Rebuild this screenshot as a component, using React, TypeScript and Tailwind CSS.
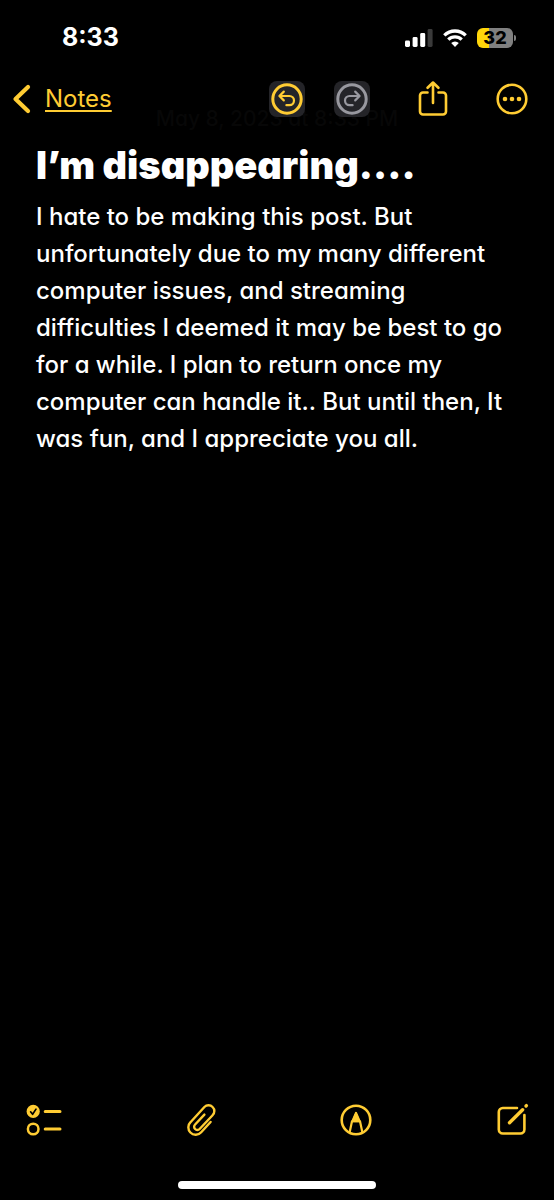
import type { ReactNode } from 'react';

const NOTE = {
  date: 'May 8, 2023 at 8:33 PM',
  title: 'I’m disappearing....',
  body: 'I hate to be making this post. But unfortunately due to my many different computer issues, and streaming difficulties I deemed it may be best to go for a while. I plan to return once my computer can handle it.. But until then, It was fun, and I appreciate you all.',
};

type IconButtonProps = {
  label: string;
  className?: string;
  disabled?: boolean;
  children: ReactNode;
};

function IconButton({ label, className = '', disabled, children }: IconButtonProps) {
  return (
    <button type="button" aria-label={label} disabled={disabled} className={`size-9 shrink-0 ${className}`}>
      <svg
        viewBox="0 0 36 36"
        className="size-9"
        fill="none"
        stroke="currentColor"
        strokeWidth="2.6"
        strokeLinecap="round"
        strokeLinejoin="round"
        aria-hidden="true"
      >
        {children}
      </svg>
    </button>
  );
}

function StatusBar() {
  return (
    <div className="flex h-[75px] items-center justify-between pl-[62px] pr-[38px]">
      <time className="text-[25px] font-bold">8:33</time>
      <div className="flex items-center gap-[10px]">
        <svg viewBox="0 0 28 18" className="h-[18px] w-7" fill="currentColor" aria-label="Signal">
          <rect x="0" y="11.5" width="5" height="6.5" rx="1.4" />
          <rect x="7.6" y="8" width="5" height="10" rx="1.4" />
          <rect x="15.2" y="4" width="5" height="14" rx="1.4" />
          <rect x="22.6" y="0" width="5" height="18" rx="1.4" fill="#3a3a3a" />
        </svg>
        <svg viewBox="0 0 24 18" className="h-[18px] w-6" fill="none" stroke="currentColor" strokeWidth="3.3" aria-label="Wi-Fi">
          <path d="M1.3 6.4a15.2 15.2 0 0 1 21.4 0" />
          <path d="M5.3 10.6a9.5 9.5 0 0 1 13.4 0" />
          <path d="M12 18 8.2 14.1a5.4 5.4 0 0 1 7.6 0z" fill="currentColor" stroke="none" />
        </svg>
        <div className="flex items-center gap-px">
          <span className="flex h-5 w-9 items-center justify-center rounded-md bg-linear-to-r from-[#ffd60a] from-33% to-[#808080] to-33% text-lg font-extrabold text-black">
            32
          </span>
          <span className="h-[6px] w-[2px] rounded-r-full bg-[#808080]" />
        </div>
      </div>
    </div>
  );
}

function NavBar() {
  return (
    <header className="relative flex h-12 items-center justify-between pl-3 pr-6 text-[#ffcc33]">
      <p className="absolute inset-x-0 top-7 text-center text-[21px] leading-8 font-medium text-[#070707] [font-feature-settings:'cv11']">
        {NOTE.date}
      </p>
      <a href="#notes" className="relative flex items-center gap-[14px] text-2xl">
        <svg viewBox="0 0 19 30" className="h-[30px] w-[19px]" fill="none" stroke="currentColor" strokeWidth="4.2" strokeLinecap="round" strokeLinejoin="round" aria-hidden="true">
          <path d="M16 3 3.5 15 16 27" />
        </svg>
        <span className="underline decoration-2 underline-offset-3">Notes</span>
      </a>
      <div className="relative flex items-center gap-11">
        <div className="flex gap-[29px]">
          <IconButton label="Undo" className="rounded-lg bg-[#242428]">
            <circle cx="18" cy="18" r="14.2" strokeWidth="3" />
            <path d="M14.8 10.6 10.4 15l4.4 4.4M10.8 15h9.6a4.6 4.6 0 0 1 0 9.2h-3" strokeWidth="2.2" />
          </IconButton>
          <IconButton label="Redo" disabled className="rounded-lg bg-[#242428] text-[#98989f]">
            <circle cx="18" cy="18" r="14.2" strokeWidth="3" />
            <path d="M21.2 10.6 25.6 15l-4.4 4.4M25.2 15h-9.6a4.6 4.6 0 0 0 0 9.2h3" strokeWidth="2.2" />
          </IconButton>
        </div>
        <IconButton label="Share">
          <path d="M13.500 11.500H9a3 3 0 0 0-3 3v16a3 3 0 0 0 3 3h20a3 3 0 0 0 3-3v-16a3 3 0 0 0-3-3h-4.500" />
          <path d="M19 22V1.8M13.600 6.8 19 1.5l5.400 5.3" />
        </IconButton>
        <IconButton label="More">
          <circle cx="18" cy="18" r="14.3" />
          <g fill="currentColor" stroke="none">
            <circle cx="11" cy="18" r="2.3" />
            <circle cx="18" cy="18" r="2.3" />
            <circle cx="25" cy="18" r="2.3" />
          </g>
        </IconButton>
      </div>
    </header>
  );
}

function Toolbar() {
  return (
    <nav className="flex items-center justify-between pl-[26px] pr-6 text-[#ffcc33]">
      <IconButton label="Checklist">
        <circle cx="7.2" cy="9.4" r="6.6" fill="currentColor" stroke="none" />
        <path d="m4.6 9.8 2 2.5 3.4-5.2" stroke="#000" strokeWidth="1.7" />
        <circle cx="7.2" cy="27" r="5.3" strokeWidth="2.5" />
        <path d="M19.2 9.4H34M19.2 27H34" strokeWidth="3" />
      </IconButton>
      <IconButton label="Attach">
        <path
          d="m28.600 20-9.400 10.200a7.300 7.300 0 0 1-10.800.3 7.300 7.300 0 0 1 .1-10.300L22.400 5a5.700 5.700 0 0 1 8.200 0 5.700 5.700 0 0 1 0 8.200L17.600 27a3.100 3.100 0 0 1-4.500 0 3.100 3.100 0 0 1 0-4.500L22.400 12.600"
          strokeWidth="2.4"
        />
      </IconButton>
      <IconButton label="Markup">
        <circle cx="18" cy="18" r="14.3" />
        <path d="m11.6 30.4 2.4-11.2h8l2.4 11.2M14.2 19.6 18 11l3.8 8.6" strokeWidth="2.2" />
        <path d="m14.2 19.4 3.8-9 3.8 9z" fill="currentColor" strokeWidth="1" />
      </IconButton>
      <IconButton label="New note">
        <path d="M23 6H8.800a4 4 0 0 0-4 4v17.500a4 4 0 0 0 4 4h17.600a4 4 0 0 0 4-4V13" />
        <path d="M15.500 20.800 28.600 7.700" strokeWidth="3.400" />
        <path d="m32 4 .4-.4" strokeWidth="3.400" />
      </IconButton>
    </nav>
  );
}

export default function App() {
  return (
    <div className="flex min-h-screen flex-col bg-black font-['Inter',sans-serif] text-white">
      <StatusBar />
      <NavBar />
      <main className="flex-1 px-9 pt-[18px] [font-feature-settings:'cv11']">
        <h1 className="text-[38px] leading-[48px] font-black">{NOTE.title}</h1>
        <p className="mt-[9px] text-2xl leading-[37px] font-medium">{NOTE.body}</p>
      </main>
      <Toolbar />
      <div className="flex justify-center pt-[43px] pb-[11px]">
        <div className="h-2 w-[198px] rounded-full bg-white" />
      </div>
    </div>
  );
}
